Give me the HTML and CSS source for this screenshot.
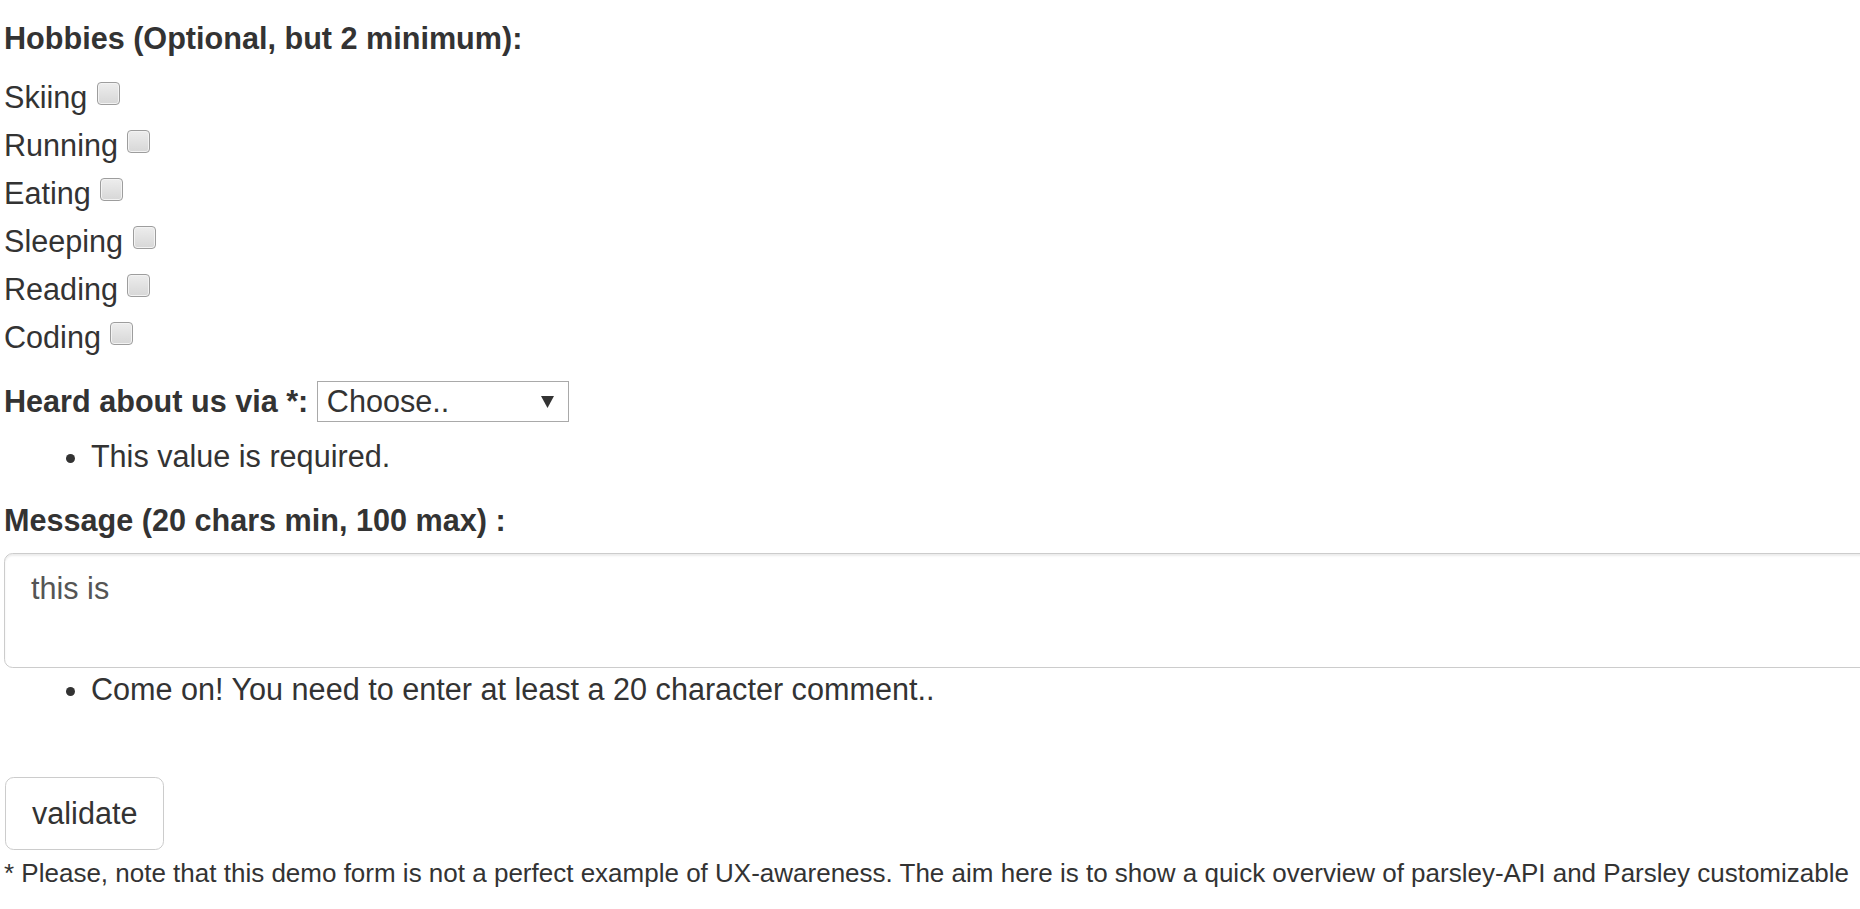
FILE: index.html
```html
<!DOCTYPE html>
<html lang="en">
<head>
<meta charset="utf-8">
<title>Parsley demo form</title>
<link rel="stylesheet" href="styles.css">
</head>
<body>
<form class="page" novalidate>
  <label class="field-label" for="hobby1">Hobbies (Optional, but 2 minimum):</label>
  <p class="hobbies">
    Skiing <input class="hobby-box" type="checkbox" id="hobby1" name="hobbies[]" value="ski"><br>
    Running <input class="hobby-box" type="checkbox" id="hobby2" name="hobbies[]" value="run"><br>
    Eating <input class="hobby-box" type="checkbox" id="hobby3" name="hobbies[]" value="eat"><br>
    Sleeping <input class="hobby-box" type="checkbox" id="hobby4" name="hobbies[]" value="sleep"><br>
    Reading <input class="hobby-box" type="checkbox" id="hobby5" name="hobbies[]" value="read"><br>
    Coding <input class="hobby-box" type="checkbox" id="hobby6" name="hobbies[]" value="code">
  </p>

  <div class="heard-line">
    <label class="field-label" for="heard">Heard about us via *:</label>
    <span class="select-box">
      <select id="heard" class="select-native" required>
        <option value="">Choose..</option>
        <option value="press">Press</option>
        <option value="net">Internet</option>
        <option value="mouth">Word of mouth</option>
        <option value="other">Other..</option>
      </select>
      <svg class="select-arrow" width="13" height="12" viewBox="0 0 13 12" aria-hidden="true"><polygon points="0,0 13,0 6.5,12" fill="#333"/></svg>
    </span>
  </div>
  <ul class="errors errors-first"><li>This value is required.</li></ul>

  <label class="field-label" for="message">Message (20 chars min, 100 max) :</label>
  <textarea id="message" class="message" name="message">this is</textarea>
  <ul class="errors"><li>Come on! You need to enter at least a 20 character comment..</li></ul>

  <div class="spacer"></div>
  <button type="submit" class="btn">validate</button>
  <p class="note"><small>* Please, note that this demo form is not a perfect example of UX-awareness. The aim here is to show a quick overview of parsley-API and Parsley customizable behavior.</small></p>
</form>
</body>
</html>
```

FILE: styles.css
```css
html, body {
  margin: 0;
  padding: 0;
  overflow: hidden;
  background: #fff;
}

body {
  font-family: "Liberation Sans", Arial, Helvetica, sans-serif;
  font-size: 30.6px;
  line-height: 43.4px;
  color: #333;
}

.page {
  display: block;
  width: 1890px;
  padding: 17px 0 0 4px;
  margin: 0;
}

.field-label {
  display: inline-block;
  font-weight: bold;
  margin-bottom: 10.9px;
}

.hobbies {
  margin: 0 0 21.7px;
}

.hobby-box {
  -webkit-appearance: none;
  appearance: none;
  box-sizing: border-box;
  width: 23px;
  height: 23px;
  margin: 11px 0 2.5px 1px;
  vertical-align: baseline;
  border: 1px solid #9d9d9d;
  border-radius: 4px;
  background: linear-gradient(#ededed, #d7d7d7);
  box-shadow: inset 0 0 0 1px #f3f3f3;
}

.heard-line {
  display: block;
}

.select-box {
  display: inline-flex;
  align-items: center;
  box-sizing: border-box;
  width: 252px;
  height: 41px;
  margin-left: 0;
  border: 1px solid #a9a9a9;
  background: #fff;
  vertical-align: baseline;
}

.select-native {
  -webkit-appearance: none;
  appearance: none;
  flex: 1;
  min-width: 0;
  height: 39px;
  margin: 0;
  padding: 0 0 0 9px;
  border: 0;
  background: transparent;
  font: inherit;
  line-height: 35px;
  color: #333;
  outline: none;
}

.select-arrow {
  flex: none;
  margin: 0 14px 0 4px;
}

.errors {
  margin: 0 0 21.7px;
  padding-left: 86.9px;
}

.errors-first {
  margin-bottom: 21px;
}

.message {
  display: block;
  box-sizing: border-box;
  width: 100%;
  height: 115px;
  margin: 0;
  padding: 13px 26px;
  border: 1px solid #ccc;
  border-radius: 8.7px;
  box-shadow: inset 0 2px 2px rgba(0, 0, 0, 0.075);
  font: inherit;
  line-height: 43.4px;
  color: #555;
  resize: none;
  background: #fff;
}

.spacer {
  height: 43.4px;
}

.btn {
  display: inline-block;
  box-sizing: border-box;
  margin: 0 0 0 1px;
  padding: 14px 26px;
  border: 1px solid #ccc;
  border-radius: 8.7px;
  background: #fff;
  font: inherit;
  line-height: 43.4px;
  color: #333;
  vertical-align: middle;
}

.note {
  margin: 0;
}

.note small {
  font-size: 85%;
}
```
